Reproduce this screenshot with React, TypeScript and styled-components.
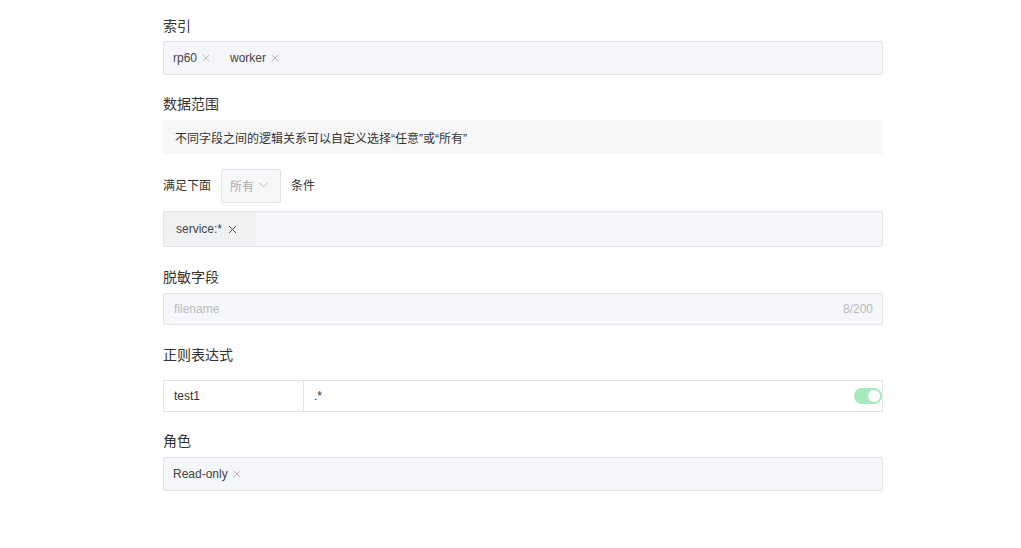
import React from "react";
import styled, { createGlobalStyle } from "styled-components";

const GlobalStyle = createGlobalStyle`
body {
	margin: 0;
	background: #fff;
	font-family: "Liberation Sans", "Noto Sans CJK SC", sans-serif;
	color: #333;
}
`

const Page = styled.div`
	width: 720px;
	padding: 16px 0 0 163px;
	display: flex;
	flex-direction: column;
`
const Label = styled.div<{ $gap?: number }>`
	font-size: 14px;
	line-height: 20px;
	color: #333;
	margin-bottom: ${(p) => p.$gap ?? 5}px;
`
const Section = styled.div<{ $top?: number }>`
	margin-top: ${(p) => p.$top ?? 0}px;
	display: flex;
	flex-direction: column;
`
const TagBox = styled.div<{ $h?: number }>`
	box-sizing: border-box;
	height: ${(p) => p.$h ?? 34}px;
	background: #f5f6f9;
	border: 1px solid #e1e4e8;
	border-radius: 2px;
	display: flex;
	align-items: center;
	padding-left: 9px;
	gap: 20px;
`
const Tag = styled.span`
	font-size: 12px;
	color: #444;
	display: inline-flex;
	align-items: center;
	gap: 5px;
`
const Info = styled.div`
	height: 34px;
	background: #f7f7f8;
	font-size: 12px;
	color: #333;
	display: flex;
	align-items: center;
	padding-left: 12px;
`
const Row = styled.div`
	display: flex;
	align-items: center;
	height: 34px;
	margin-top: 15px;
	font-size: 12px;
	color: #333;
`
const RowText = styled.span`
	margin-bottom: 3px;
`
const Select = styled.div`
	box-sizing: border-box;
	width: 60px;
	height: 34px;
	margin: 0 10px;
	background: #f6f7f9;
	border: 1px solid #e1e4e8;
	border-radius: 2px;
	display: flex;
	align-items: center;
	padding: 0 0 2px 8px;
	gap: 5px;
	color: #aaa;
	font-size: 12px;
`
const CondBox = styled.div`
	box-sizing: border-box;
	height: 36px;
	margin-top: 8px;
	background: #f5f6f9;
	border: 1px solid #e1e4e8;
	border-radius: 2px;
	display: flex;
	align-items: stretch;
`
const Chip = styled.div`
	background: #f0f1f3;
	display: flex;
	align-items: center;
	padding: 0 19px 0 12px;
	gap: 6px;
	font-size: 12px;
	color: #444;
`
const Input = styled.div`
	box-sizing: border-box;
	height: 32px;
	background: #f5f6f9;
	border: 1px solid #e1e4e8;
	border-radius: 2px;
	display: flex;
	align-items: center;
	justify-content: space-between;
	padding: 0 9px 0 10px;
	font-size: 12px;
	color: #bbb;
`
const RegexRow = styled.div`
	box-sizing: border-box;
	height: 32px;
	border: 1px solid #e1e4e8;
	display: flex;
	font-size: 12px;
	color: #333;
`
const Cell = styled.div<{ $w?: number }>`
	box-sizing: border-box;
	${(p) => (p.$w ? `width: ${p.$w}px;` : "flex: 1;")}
	display: flex;
	align-items: center;
	justify-content: space-between;
	padding-left: 10px;
	& + & {
		border-left: 1px solid #e1e4e8;
	}
`
const Toggle = styled.div`
	width: 28px;
	height: 16px;
	border-radius: 8px;
	background: #a6e9bf;
	position: relative;
	&::after {
		content: "";
		position: absolute;
		right: 2px;
		top: 2px;
		width: 12px;
		height: 12px;
		border-radius: 50%;
		background: #fff;
	}
`

function Cross({ size = 8, color = "#b4b4b4" }: { size?: number; color?: string }) {
	return (
		<svg width={size} height={size} viewBox="0 0 10 10">
			<path d="M1 1L9 9M9 1L1 9" stroke={color} strokeWidth="1.1" />
		</svg>
	);
}

function App() {
	return (
		<>
			<GlobalStyle />
			<Page>
				<Section>
					<Label>索引</Label>
					<TagBox>
						<Tag>rp60<Cross /></Tag>
						<Tag>worker<Cross /></Tag>
					</TagBox>
				</Section>
				<Section $top={19}>
					<Label $gap={6}>数据范围</Label>
					<Info>不同字段之间的逻辑关系可以自定义选择“任意”或“所有”</Info>
					<Row>
						<RowText>满足下面</RowText>
						<Select>
							所有
							<svg width="9" height="6" viewBox="0 0 9 6">
								<path d="M0.5 0.8L4.5 4.8L8.5 0.8" stroke="#bbb" fill="none" strokeWidth="1" />
							</svg>
						</Select>
						<RowText>条件</RowText>
					</Row>
					<CondBox>
						<Chip>
							service:*
							<Cross size={9} color="#555" />
						</Chip>
					</CondBox>
				</Section>
				<Section $top={20}>
					<Label $gap={6}>脱敏字段</Label>
					<Input>
						<span>filename</span>
						<span>8/200</span>
					</Input>
				</Section>
				<Section $top={20}>
					<Label $gap={15}>正则表达式</Label>
					<RegexRow>
						<Cell $w={139}>test1</Cell>
						<Cell>
							.*
							<Toggle />
						</Cell>
					</RegexRow>
				</Section>
				<Section $top={19}>
					<Label $gap={6}>角色</Label>
					<TagBox>
						<Tag>Read-only<Cross /></Tag>
					</TagBox>
				</Section>
			</Page>
		</>
	);
}

export default App;
